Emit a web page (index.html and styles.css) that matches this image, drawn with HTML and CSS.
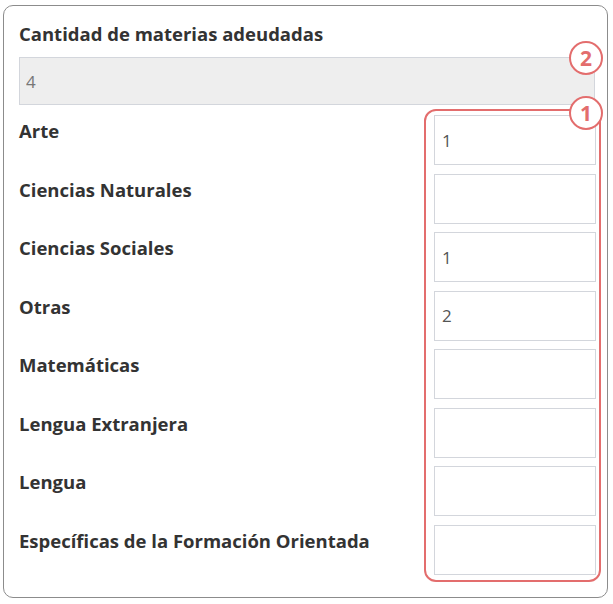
FILE: index.html
```html
<!DOCTYPE html>
<html lang="es">
<head>
  <meta charset="UTF-8" />
  <title>Materias adeudadas</title>
  <link rel="stylesheet" href="styles.css">
</head>
<body>
  <div class="card">
    <label class="title" for="total">Cantidad de materias adeudadas</label>
    <div class="total-wrap">
      <input type="text" id="total" class="total" value="4" readonly />
      <span class="badge badge-total">2</span>
    </div>

    <div class="rows">
      <div class="row"><label>Arte</label><input type="text" value="1" /></div>
      <div class="row"><label>Ciencias Naturales</label><input type="text" value="" /></div>
      <div class="row"><label>Ciencias Sociales</label><input type="text" value="1" /></div>
      <div class="row"><label>Otras</label><input type="text" value="2" /></div>
      <div class="row"><label>Matemáticas</label><input type="text" value="" /></div>
      <div class="row"><label>Lengua Extranjera</label><input type="text" value="" /></div>
      <div class="row"><label>Lengua</label><input type="text" value="" /></div>
      <div class="row"><label>Específicas de la Formación Orientada</label><input type="text" value="" /></div>

      <!-- highlight around the subject inputs -->
      <div class="highlight"></div>
      <span class="badge badge-rows">1</span>
    </div>
  </div>
</body>
</html>
```

FILE: styles.css
```css
body {
  margin: 0;
  font-family: 'Open Sans', 'Liberation Sans', sans-serif;
  background: #fff;
  color: #333;
}
.card {
  margin: 5px 5px 5px 3px;
  height: 593px;
  box-sizing: border-box;
  border: 1px solid #8c8c8c;
  border-radius: 10px;
  padding: 17px 12px 0 15px;
}
.title {
  display: block;
  font-size: 18.5px;
  font-weight: bold;
  line-height: 22px;
  margin-bottom: 12px;
}
.total-wrap {
  position: relative;
}
.total {
  display: block;
  width: 100%;
  height: 48px;
  box-sizing: border-box;
  border: 1px solid #d3d6dc;
  background: #eeeeee;
  color: #777;
  font-family: inherit;
  font-size: 17px;
  padding: 0 6px;
}
.rows {
  position: relative;
  margin-top: 10px;
}
.row {
  display: flex;
  justify-content: space-between;
  align-items: flex-start;
  height: 58.5px;
}
.row label {
  font-size: 18.5px;
  font-weight: bold;
  line-height: 22px;
  padding-top: 5px;
}
.row input {
  width: 162px;
  height: 50px;
  box-sizing: border-box;
  border: 1px solid #d3d6dc;
  background: #fff;
  color: #555;
  font-family: inherit;
  font-size: 17px;
  padding: 0 7px;
  margin-right: -1px;
}
.highlight {
  position: absolute;
  top: -6px;
  right: -6px;
  width: 177px;
  height: 473px;
  box-sizing: border-box;
  border: 2px solid #e36d6d;
  border-radius: 12px;
}
.badge {
  position: absolute;
  width: 34px;
  height: 34px;
  box-sizing: border-box;
  border: 2px solid #e36d6d;
  border-radius: 50%;
  background: #fff;
  color: #e36d6d;
  font-size: 21px;
  font-weight: bold;
  line-height: 30px;
  text-align: center;
}
.badge-total {
  top: -16px;
  right: -8px;
}
.badge-rows {
  top: -19px;
  right: -8px;
}
```
